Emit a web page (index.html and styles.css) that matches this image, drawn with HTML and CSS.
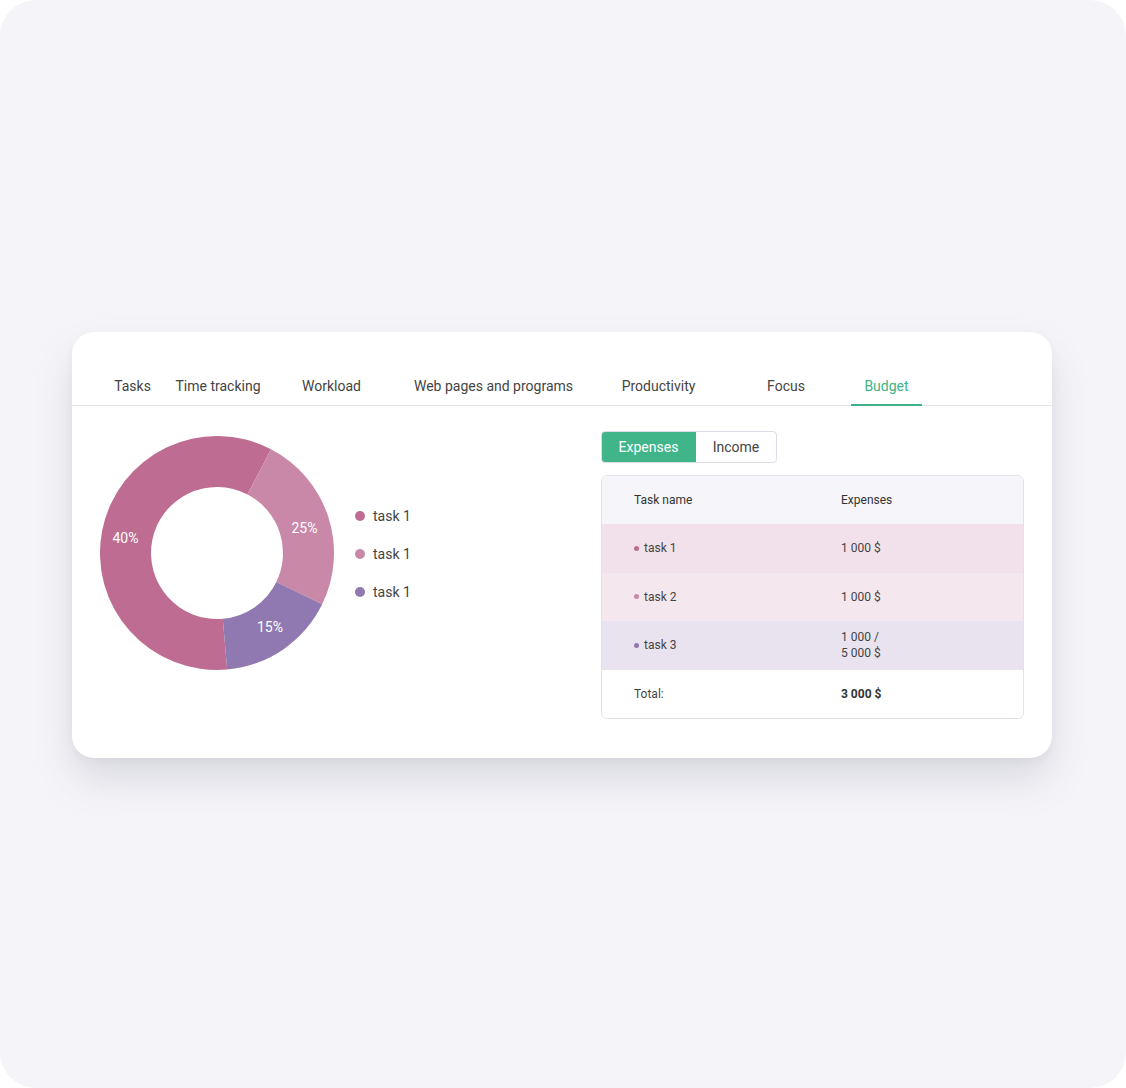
FILE: index.html
```html
<!DOCTYPE html>
<html lang="en">
<head>
<meta charset="utf-8">
<title>Budget</title>
<link rel="stylesheet" href="styles.css">
</head>
<body>
<div class="frame">
  <div class="card">
    <nav class="tabs">
      <div class="tab t1">Tasks</div>
      <div class="tab t2">Time tracking</div>
      <div class="tab t3">Workload</div>
      <div class="tab t4">Web pages and programs</div>
      <div class="tab t5">Productivity</div>
      <div class="tab t6">Focus</div>
      <div class="tab t7 active">Budget</div>
    </nav>
    <div class="content">
      <div class="chart">
        <svg class="donut" width="236" height="236" viewBox="0 0 236 236">
          <path fill="#be6c91" d="M128.20 234.55 A117 117 0 1 1 172.02 14.22 L148.47 59.46 A66 66 0 1 0 123.75 183.75 Z"/>
          <path fill="#c988a8" d="M172.02 14.22 A117 117 0 0 1 223.16 169.29 L177.32 146.93 A66 66 0 0 0 148.47 59.46 Z"/>
          <path fill="#9079b1" d="M223.16 169.29 A117 117 0 0 1 128.20 234.55 L123.75 183.75 A66 66 0 0 0 177.32 146.93 Z"/>
          <text class="pct" x="26.5" y="103">40%</text>
          <text class="pct" x="205.5" y="93">25%</text>
          <text class="pct" x="171" y="192">15%</text>
        </svg>
        <ul class="legend">
          <li><span class="dot c1"></span>task 1</li>
          <li><span class="dot c2"></span>task 1</li>
          <li><span class="dot c3"></span>task 1</li>
        </ul>
      </div>
      <div class="side">
        <div class="toggle">
          <div class="opt on">Expenses</div>
          <div class="opt">Income</div>
        </div>
        <div class="table">
          <div class="row head"><div>Task name</div><div>Expenses</div></div>
          <div class="row r1"><div><span class="sdot c1"></span>task 1</div><div>1 000 $</div></div>
          <div class="row r2"><div><span class="sdot c2"></span>task 2</div><div>1 000 $</div></div>
          <div class="row r3"><div><span class="sdot c3"></span>task 3</div><div>1 000 /<br>5 000 $</div></div>
          <div class="row total"><div>Total:</div><div class="bold">3 000 $</div></div>
        </div>
      </div>
    </div>
  </div>
</div>
</body>
</html>
```

FILE: styles.css
```css
* { box-sizing: border-box; }
html, body { margin: 0; padding: 0; background: #ffffff; }
body { font-family: Roboto, "Liberation Sans", Arial, sans-serif; color: #444; }

.frame {
  width: 1126px;
  height: 1088px;
  background: #f5f5f9;
  border-radius: 36px;
  padding: 332px 74px 0 72px;
}

.card {
  width: 980px;
  height: 426px;
  background: #fff;
  border-radius: 22px;
  box-shadow: 0 22px 40px rgba(40, 40, 70, 0.13), 0 4px 10px rgba(40, 40, 70, 0.04);
}

.tabs {
  display: grid;
  grid-template-columns: 63px 108px 119px 205px 125px 130px 71px;
  padding: 44px 0 0 29px;
  border-bottom: 1px solid #e3e3e8;
}
.tab {
  text-align: center;
  font-size: 14px;
  line-height: 20px;
  color: #444;
  padding-bottom: 8px;
  border-bottom: 2px solid transparent;
  margin-bottom: -1px;
  white-space: nowrap;
}
.tab.active { color: #3db387; border-bottom-color: #3db387; }

.content {
  display: flex;
  padding: 0 28px 0 27px;
}

.chart {
  display: flex;
  align-items: center;
  gap: 20px;
  margin-top: 29px;
  height: 236px;
}
.donut { display: block; }
.pct {
  fill: #fff;
  font-size: 14px;
  font-family: Roboto, "Liberation Sans", Arial, sans-serif;
  text-anchor: middle;
  dominant-baseline: central;
}

.legend {
  list-style: none;
  margin: 2px 0 0;
  padding: 0;
  display: flex;
  flex-direction: column;
  gap: 18px;
}
.legend li {
  display: flex;
  align-items: center;
  font-size: 14px;
  line-height: 20px;
  color: #444;
}
.dot {
  width: 10px;
  height: 10px;
  border-radius: 50%;
  margin-right: 8px;
}
.c1 { background: #be6c91; }
.c2 { background: #c988a8; }
.c3 { background: #9079b1; }

.side {
  margin-left: auto;
  width: 423px;
  margin-top: 25px;
}

.toggle {
  display: inline-flex;
  height: 32px;
  border: 1px solid #dcdce6;
  border-radius: 4px;
  overflow: hidden;
}
.opt {
  display: flex;
  align-items: center;
  justify-content: center;
  font-size: 14px;
  color: #444;
  width: 80px;
}
.opt.on {
  background: #40b58a;
  color: #fff;
  width: 95px;
  margin: -1px 0 -1px -1px;
}

.table {
  margin-top: 12px;
  border: 1px solid #e2e2ea;
  border-radius: 6px;
  overflow: hidden;
}
.row {
  display: grid;
  grid-template-columns: 207px 1fr;
  align-items: center;
  padding-left: 32px;
  padding-bottom: 1px;
  height: 49px;
  font-size: 12px;
  line-height: 16px;
  color: #444;
}
.row > div { display: flex; align-items: center; }
.row.head { background: #f6f6fa; height: 48px; color: #333; }
.row.r1 { background: #f2e1ea; }
.row.r2 { background: #f5e7ee; height: 48px; }
.row.r3 { background: #e9e3ef; }
.row.total { background: #fff; height: 48px; }
.bold { font-weight: 700; color: #333; }
.sdot {
  width: 5px;
  height: 5px;
  border-radius: 50%;
  margin-right: 5px;
}
```
